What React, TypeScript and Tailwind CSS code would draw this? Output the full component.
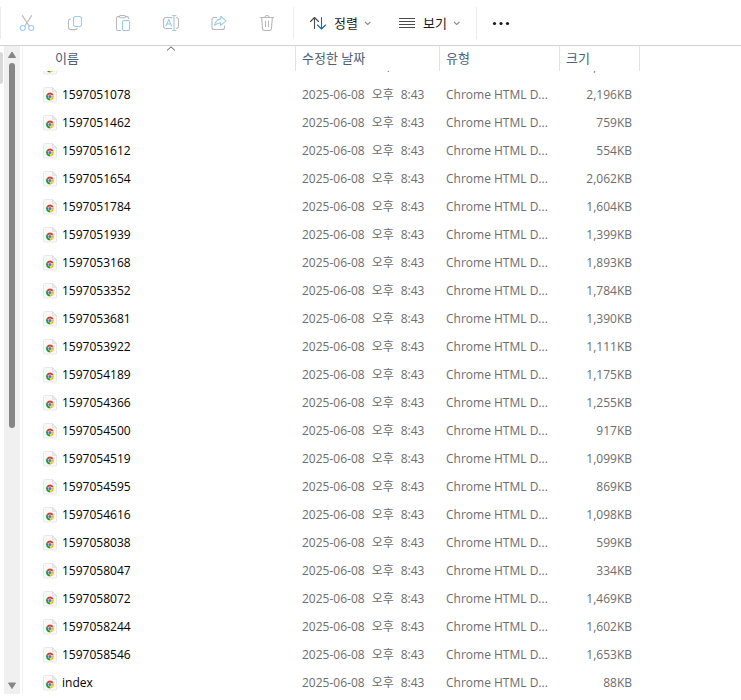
import { useLayoutEffect, useRef, type ReactNode } from "react";

type FileRow = {
  name: string;
  size: string;
};

const FILE_TYPE = "Chrome HTML D...";
const ROW_HEIGHT = 28;

const files: FileRow[] = [
  { name: "1597050912", size: "1,204KB" },
  { name: "1597051078", size: "2,196KB" },
  { name: "1597051462", size: "759KB" },
  { name: "1597051612", size: "554KB" },
  { name: "1597051654", size: "2,062KB" },
  { name: "1597051784", size: "1,604KB" },
  { name: "1597051939", size: "1,399KB" },
  { name: "1597053168", size: "1,893KB" },
  { name: "1597053352", size: "1,784KB" },
  { name: "1597053681", size: "1,390KB" },
  { name: "1597053922", size: "1,111KB" },
  { name: "1597054189", size: "1,175KB" },
  { name: "1597054366", size: "1,255KB" },
  { name: "1597054500", size: "917KB" },
  { name: "1597054519", size: "1,099KB" },
  { name: "1597054595", size: "869KB" },
  { name: "1597054616", size: "1,098KB" },
  { name: "1597058038", size: "599KB" },
  { name: "1597058047", size: "334KB" },
  { name: "1597058072", size: "1,469KB" },
  { name: "1597058244", size: "1,602KB" },
  { name: "1597058546", size: "1,653KB" },
  { name: "index", size: "88KB" },
];

const GREY = "#b9b9b9";
const BLUE = "#9ccbf0";

function Icon({ children }: { children: ReactNode }) {
  return (
    <svg
      viewBox="0 0 20 20"
      className="h-5 w-5 shrink-0"
      fill="none"
      strokeWidth="1.1"
      strokeLinecap="round"
      strokeLinejoin="round"
      aria-hidden="true"
    >
      {children}
    </svg>
  );
}

function CutIcon() {
  return (
    <Icon>
      <path d="M5.4 2.6 12.3 13.2M14.6 2.6 7.7 13.2" stroke={GREY} />
      <circle cx="5.8" cy="15" r="2.5" stroke={BLUE} />
      <circle cx="14.2" cy="15" r="2.5" stroke={BLUE} />
    </Icon>
  );
}

function CopyIcon() {
  return (
    <Icon>
      <path
        d="M5.5 6a2.3 2.3 0 0 0-2 2.2v6a2.4 2.4 0 0 0 2.4 2.4h4a2.4 2.4 0 0 0 2.3-1.4"
        stroke={GREY}
      />
      <rect x="8.5" y="3.5" width="8" height="10" rx="2.2" stroke={BLUE} />
    </Icon>
  );
}

function PasteIcon() {
  return (
    <Icon>
      <path
        d="M6.5 3.6H4.9a1.4 1.4 0 0 0-1.4 1.4v11.1a1.4 1.4 0 0 0 1.4 1.4h2.6M12.5 3.6h1.6a1.4 1.4 0 0 1 1.4 1.4v.6"
        stroke={GREY}
      />
      <rect x="6.5" y="2.5" width="6" height="2.2" rx="1.1" stroke={GREY} />
      <rect x="9.5" y="7.5" width="7" height="10" rx="1.3" stroke={BLUE} />
    </Icon>
  );
}

function RenameIcon() {
  return (
    <Icon>
      <path
        d="M10.8 4.5H5A2.5 2.5 0 0 0 2.5 7v6A2.5 2.5 0 0 0 5 15.5h5.8M15.5 4.5A2.5 2.5 0 0 1 17.5 7v6a2.5 2.5 0 0 1-2 2.5"
        stroke={GREY}
      />
      <path d="M5 13 7.8 6.5 10.6 13M6 11h3.6" stroke={BLUE} />
      <path d="M11.5 2.5h3.4M13 2.5v15M11.5 17.5h3.4" stroke={BLUE} />
    </Icon>
  );
}

function ShareIcon() {
  return (
    <Icon>
      <path
        d="M7.5 4.5H5a2 2 0 0 0-2 2v8a2 2 0 0 0 2 2h8.5a2 2 0 0 0 2-2V13"
        stroke={GREY}
      />
      <path
        d="M11.7 3.2 17 7.8l-5.3 4.500V9.900c-2.700 0-4.500.7-6 2.500.4-3.800 2.400-6 6-6.500z"
        stroke={BLUE}
      />
    </Icon>
  );
}

function TrashIcon() {
  return (
    <Icon>
      <path
        d="M3.3 4.5h13.4M8 4.5a2 2 0 0 1 4 0M4.6 4.5l1 11.4a1.7 1.7 0 0 0 1.7 1.6h5.4a1.7 1.7 0 0 0 1.7-1.6l1-11.4M8.5 8v5.5M11.5 8v5.5"
        stroke={GREY}
      />
    </Icon>
  );
}

function SortIcon() {
  return (
    <Icon>
      <path d="M6.5 15.5v-11M2.5 8.5l4-4 4 4" stroke="#4a4a4a" />
      <path d="M13.5 4.5V16M9.5 12l4 4 4-4" stroke="#0f6cbd" />
    </Icon>
  );
}

function ViewIcon() {
  return (
    <Icon>
      <path
        d="M2 5.5h16M2 8.5h16M2 11.5h16M2 14.5h16"
        stroke="#4a4a4a"
        strokeWidth="1"
        strokeLinecap="butt"
      />
    </Icon>
  );
}

function ChevronIcon() {
  return (
    <svg viewBox="0 0 8 8" className="h-2 w-2" fill="none" aria-hidden="true">
      <path d="M1 3 3.7 5.5 6.4 3" stroke="#8c8c8c" strokeWidth="1.1" />
    </svg>
  );
}

// Page with a folded corner and the browser logo on it
function HtmlFileIcon() {
  return (
    <svg viewBox="0 0 14 16" className="h-4 w-[14px] shrink-0" aria-hidden="true">
      <path
        d="M1.5.5h8l4 4V14a1 1 0 0 1-1 1h-11a1 1 0 0 1-1-1V1.500a1 1 0 0 1 1-1z"
        fill="#f8f8f8"
        stroke="#e8e8e8"
      />
      <path d="M9.5.5v4h4z" fill="#e9e9e9" stroke="#dadada" strokeWidth=".6" />
      <path d="M7 9.5 3.54 7.5a4 4 0 0 1 6.92 0z" fill="#e33b2e" />
      <path d="M7 9.5 3.54 7.5A4 4 0 0 0 7 13.5z" fill="#1e9e4a" />
      <path d="M7 9.5 10.46 7.5A4 4 0 0 1 7 13.5z" fill="#fcc31e" />
      <circle cx="7" cy="9.5" r="2" fill="#fff" />
      <circle cx="7" cy="9.5" r="1.6" fill="#3b7de9" />
    </svg>
  );
}

const actions = [
  { label: "잘라내기", icon: <CutIcon /> },
  { label: "복사", icon: <CopyIcon /> },
  { label: "붙여넣기", icon: <PasteIcon /> },
  { label: "이름 바꾸기", icon: <RenameIcon /> },
  { label: "공유", icon: <ShareIcon /> },
  { label: "삭제", icon: <TrashIcon /> },
];

function Toolbar() {
  return (
    <div className="flex h-[46px] shrink-0 items-center border-b border-[#d2d2d2] text-[13px]">
      <div className="h-8 w-px bg-[#ececec]" />
      <div className="ml-[6px] flex gap-2">
        {actions.map((action) => (
          <button
            key={action.label}
            type="button"
            aria-label={action.label}
            disabled
            className="flex h-8 w-10 items-center justify-center"
          >
            {action.icon}
          </button>
        ))}
      </div>
      <div className="ml-[6px] h-8 w-px bg-[#ececec]" />
      <button type="button" className="ml-[14px] flex h-8 items-center gap-[6px] text-[#1a1a1a]">
        <SortIcon />
        정렬
        <ChevronIcon />
      </button>
      <button type="button" className="ml-[25px] flex h-8 items-center gap-[6px] text-[#1a1a1a]">
        <ViewIcon />
        보기
        <ChevronIcon />
      </button>
      <div className="ml-[15px] h-8 w-px bg-[#ececec]" />
      <button
        type="button"
        aria-label="더 보기"
        className="ml-[14px] flex h-8 items-center"
      >
        <svg viewBox="0 0 20 20" className="h-5 w-5" fill="#1a1a1a" aria-hidden="true">
          <circle cx="3.5" cy="10.5" r="1.6" />
          <circle cx="10" cy="10.5" r="1.6" />
          <circle cx="16.5" cy="10.5" r="1.6" />
        </svg>
      </button>
    </div>
  );
}

function Scrollbar() {
  return (
    <div className="flex w-4 shrink-0 flex-col items-center bg-[#f0f0f0]">
      <svg viewBox="0 0 16 17" className="h-[17px] w-4" aria-hidden="true">
        <path d="M8 6 11.5 11.5h-7z" fill="#868686" stroke="#868686" strokeLinejoin="round" />
      </svg>
      <div className="flex flex-1 flex-col">
        <div className="w-[6px] grow-[22] rounded-full bg-[#868686]" />
        <div className="grow-[15]" />
      </div>
      <svg viewBox="0 0 16 17" className="h-[17px] w-4" aria-hidden="true">
        <path d="M8 11.5 4.5 6h7z" fill="#868686" stroke="#868686" strokeLinejoin="round" />
      </svg>
    </div>
  );
}

export default function App() {
  const listRef = useRef<HTMLDivElement>(null);

  useLayoutEffect(() => {
    if (listRef.current) {
      listRef.current.scrollTop = ROW_HEIGHT - 10;
    }
  }, []);

  return (
    <div className="flex h-screen flex-col bg-white pb-[6px] font-['Open_Sans','Noto_Sans_CJK_KR',sans-serif] text-[12px] leading-4">
      <Toolbar />
      <div className="flex min-h-0 flex-1">
        <div className="w-1 shrink-0 pt-[6px]">
          <div className="h-8 w-[3px] rounded-r-sm bg-[#d9d9d9]" />
        </div>
        <Scrollbar />
        <div className="ml-[2px] w-px shrink-0 bg-[#f3f3f3]" />
        <div
          ref={listRef}
          className="min-w-0 flex-1 overflow-x-hidden overflow-y-auto pl-5 [scrollbar-width:none]"
        >
          <table className="w-[597px] table-fixed border-separate border-spacing-0">
            <colgroup>
              <col className="w-[253px]" />
              <col className="w-[144px]" />
              <col className="w-[120px]" />
              <col className="w-[80px]" />
            </colgroup>
            <thead className="sticky top-0 z-10 bg-white text-left text-[13px] text-[#4c607a]">
              <tr className="h-[25px]">
                <th className="relative border-r border-[#e2e2e2] p-0 pb-[2px] pl-3 font-normal">
                  이름
                  <div className="absolute top-0 right-0 left-1 flex justify-center">
                    <svg
                      viewBox="0 0 10 6"
                      className="h-[6px] w-[10px]"
                      fill="none"
                      aria-hidden="true"
                    >
                      <path d="M1 4.5 5 .8l4 3.7" stroke="#5a5a5a" />
                    </svg>
                  </div>
                </th>
                <th className="border-r border-[#e2e2e2] p-0 pb-[2px] pl-[6px] font-normal">
                  수정한 날짜
                </th>
                <th className="border-r border-[#e2e2e2] p-0 pb-[2px] pl-[6px] font-normal">
                  유형
                </th>
                <th className="border-r border-[#e2e2e2] p-0 pb-[2px] pl-[6px] font-normal">
                  크기
                </th>
              </tr>
            </thead>
            <tbody className="text-[#6d6d6d]">
              {files.map((file) => (
                <tr key={file.name} className="h-7">
                  <td className="p-0 text-black">
                    <div className="flex items-center gap-[5px]">
                      <HtmlFileIcon />
                      {file.name}
                    </div>
                  </td>
                  <td className="p-0 pl-[6px]">
                    <div className="flex gap-[7px] whitespace-nowrap">
                      <span>2025-06-08</span>
                      <span>오후</span>
                      <span>8:43</span>
                    </div>
                  </td>
                  <td className="p-0 pl-[6px] whitespace-nowrap">{FILE_TYPE}</td>
                  <td className="p-0 pr-2 text-right">{file.size}</td>
                </tr>
              ))}
            </tbody>
          </table>
        </div>
      </div>
    </div>
  );
}
